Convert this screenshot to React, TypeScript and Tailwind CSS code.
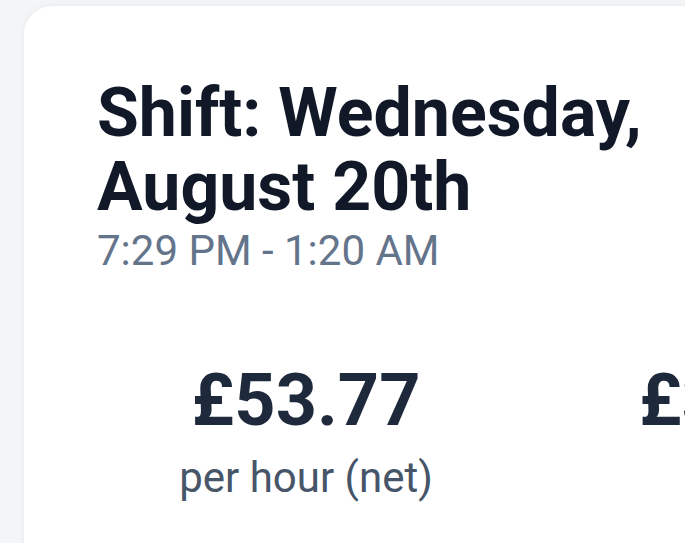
import React from "react";

export default function App() {
  return (
    <div
      className="w-[685px] h-[543px] overflow-hidden bg-[#f4f5f7] pt-[6px] pl-[24px]"
      style={{ fontFamily: "Roboto, 'Liberation Sans', sans-serif" }}
    >
      <div className="w-[1100px] h-[600px] bg-white rounded-tl-[28px] shadow-[0_0_6px_rgba(15,23,42,0.06)] pl-[73px] pt-[70px]">
        <h1 className="text-[68px] leading-[74px] font-bold text-[#111827] w-[590px]">
          Shift: Wednesday, August 20th
        </h1>
        <p className="text-[42px] leading-[48px] text-[#64748b] mt-[3px]">
          7:29 PM - 1:20 AM
        </p>
        <div className="flex gap-[49px] mt-[86px]">
          <div className="w-[418px] shrink-0 flex flex-col items-center">
            <div className="text-[72px] leading-[80px] font-bold text-[#1e293b]">£53.77</div>
            <div className="text-[42px] leading-[48px] text-[#475569] mt-[13px]">per hour (net)</div>
          </div>
          <div className="w-[420px] shrink-0 flex flex-col items-center">
            <div className="text-[72px] leading-[80px] font-bold text-[#1e293b]">£349.43</div>
            <div className="text-[42px] leading-[48px] text-[#475569] mt-[13px]">total</div>
          </div>
        </div>
      </div>
    </div>
  );
}
